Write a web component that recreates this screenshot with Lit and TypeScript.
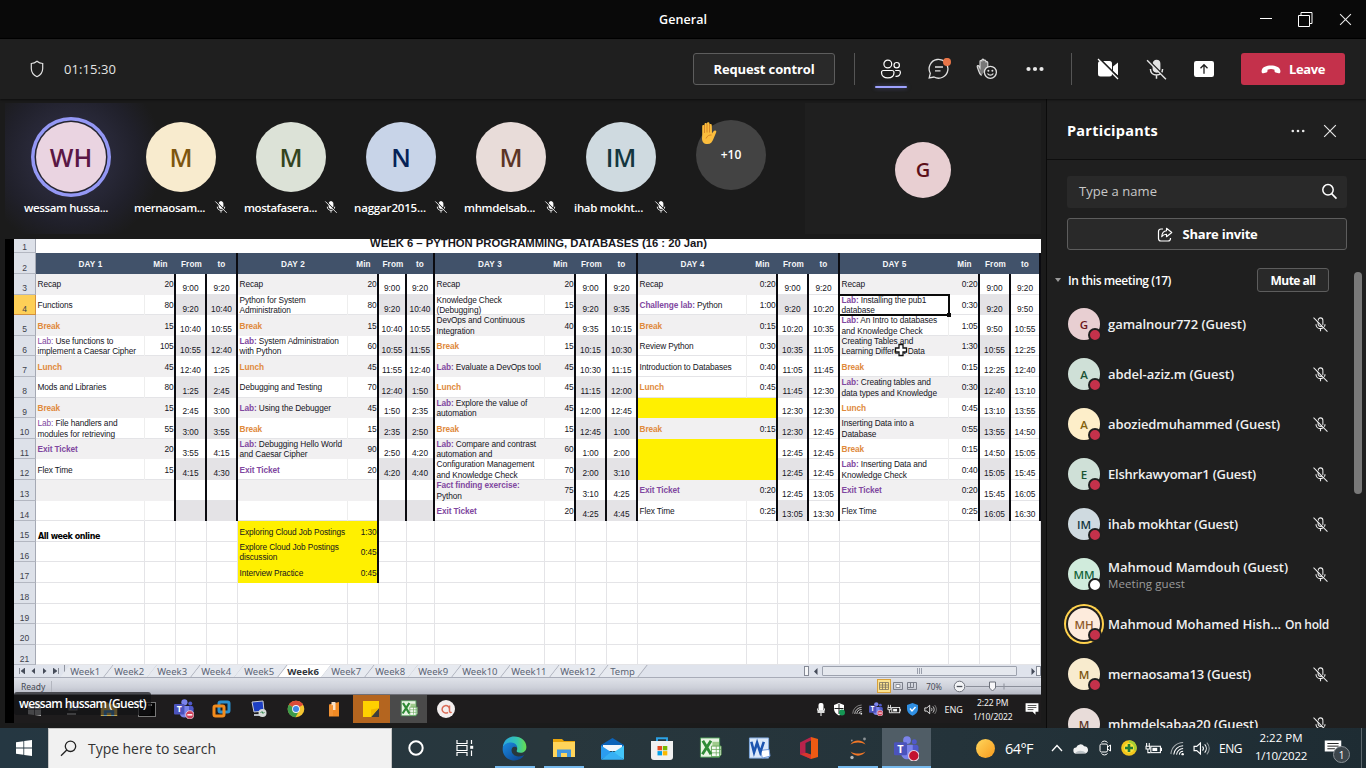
import { LitElement, html, css, svg, nothing } from "lit";
import { customElement, property } from "lit/decorators.js";
import { classMap } from "lit/directives/class-map.js";

/** Text whose tracking is adjusted so that it spans a given width. */
@customElement("fit-text")
class FitText extends LitElement {
  @property({ type: Number }) w = 0;
  @property() text = "";
  static styles = css`
    :host { display: inline-block; white-space: pre; }
    .t { display: inline-block; }
  `;
  render() {
    return html`<span class="t">${this.text}</span>`;
  }
  updated() {
    const t = this.renderRoot.querySelector(".t") as HTMLElement;
    t.style.letterSpacing = "0px";
    const now = t.getBoundingClientRect().width;
    if (this.w && now) t.style.letterSpacing = (this.w - now) / this.text.length + "px";
  }
}

const fit = (text: string, w: number) => html`<fit-text .text=${text} .w=${w}></fit-text>`;

/* ---------- icons ---------- */
const icon = (w: number, h: number, body: unknown, vb = `0 0 ${w} ${h}`) =>
  html`<svg width=${w} height=${h} viewBox=${vb} fill="none">${body}</svg>`;

const micOff = (s: number, solid = false) =>
  icon(s, s, svg`
    <rect x="7.2" y="2.2" width="5.6" height="10" rx="2.8" fill=${solid ? "currentColor" : "none"} stroke="currentColor" stroke-width="1.2"/>
    <path d="M4.7 9.6c0 3.3 2.2 5.2 5.3 5.2s5.3-1.9 5.3-5.2M10 14.8V18" stroke="currentColor" stroke-width="1.3"/>
    <path d="M2.6 1.6 18.8 17.8" stroke="#1f1f1f" stroke-width="1.6"/>
    <path d="M1.8 2 18.2 18.4" stroke="currentColor" stroke-width="1.2"/>`, "0 0 20 20");

const shield = icon(14, 18, svg`<path d="M7 1.3C5.200 2.800 3.400 3.400 1.300 3.500V8.500C1.300 12.300 3.600 15.100 7 16.700 10.400 15.100 12.700 12.300 12.700 8.500V3.500C10.600 3.400 8.800 2.800 7 1.300Z" stroke="#e0e0e0" stroke-width="1.200"/>`);

const people = icon(22, 20, svg`<g stroke="#fff" stroke-width="1.200">
  <circle cx="7.800" cy="5" r="3.900"/><circle cx="16.700" cy="6.200" r="2.700"/>
  <path d="M3.500 11.500H12c1.100 0 2 .8 2 1.900 0 3.500-2.500 5.400-6.200 5.400S1.500 16.900 1.500 13.400c0-1.100.9-1.900 2-1.900ZM15.200 11.500h3.400c1 0 1.800.8 1.800 1.800 0 2.900-1.800 4.400-4.900 4.100"/></g>`);

const chat = icon(24, 22, svg`<path d="M2.200 19.900 3.300 15.300A9.400 9.400 0 1 1 7 19l-4.800.9Z" stroke="#e0e0e0" stroke-width="1.300"/>
  <path d="M8 9h8M8 12.800h5.500" stroke="#e0e0e0" stroke-width="1.300"/><circle cx="20" cy="3.900" r="4" fill="#e97548"/>`);

const reactIcon = icon(22, 22, svg`
  <path d="M5.500 17.500C3.800 16.300 3 14.500 2.300 12L1.200 8.800c-.3-1.200 1.100-1.700 1.700-.7L4 10V3.500c0-1.400 1.900-1.400 1.900 0V2.200c0-1.500 2-1.500 2 0V3c0-1.500 2-1.400 2 .2v1.400c0-1.400 1.900-1.300 1.900.1V9" fill="#777" stroke="#ddd" stroke-width="1.100"/>
  <circle cx="14.400" cy="14.300" r="6" fill="#1f1f1f" stroke="#e0e0e0" stroke-width="1.300"/>
  <circle cx="12.400" cy="12.800" r="1" fill="#e0e0e0"/><circle cx="16.400" cy="12.800" r="1" fill="#e0e0e0"/>
  <path d="M11.500 15.500c1.300 2.200 4.500 2.200 5.800 0" stroke="#e0e0e0" stroke-width="1.200"/>`);

const dots = (r: number, g: number) => icon(20, 8, svg`<g fill="#e8e8e8"><circle cx=${10 - g} cy="4" r=${r}/><circle cx="10" cy="4" r=${r}/><circle cx=${10 + g} cy="4" r=${r}/></g>`);

const camOff = icon(22, 22, svg`<rect x="1" y="3" width="14" height="15.500" rx="2.500" fill="#fff"/><path d="m16 8.500 5-4v13l-5-4Z" fill="#fff"/>
  <path d="M2.500.5 22 20" stroke="#1f1f1f" stroke-width="1.800"/><path d="M1 1 21 21" stroke="#fff" stroke-width="1.300"/>`);

const shareUp = icon(20, 16, svg`<rect width="20" height="16" rx="2.200" fill="#fff"/><path d="M10 12.800V3.800M6.500 7.200 10 3.700l3.500 3.500" stroke="#1f1f1f" stroke-width="1.300"/>`);

const hangup = icon(20, 9, svg`<path d="M10 .6c4.700 0 8.400 1.800 9.200 4.400.3 1 .3 2-.1 2.700-.3.500-.9.600-1.500.5l-3-.7c-.7-.2-1.100-.7-1.100-1.400V4.700c-2.200-.8-4.800-.8-7 0v1.400c0 .7-.4 1.200-1.100 1.400l-3 .7c-.6.100-1.200 0-1.500-.5C.500 7 .5 6 .8 5 1.600 2.400 5.300.6 10 .6Z" fill="#fff"/>`);

const cross = (s: number) => icon(s, s, svg`<path d="M1 1 11 11M11 1 1 11" stroke="#e8e8e8" stroke-width="1"/>`, "0 0 12 12");

const lens = icon(17, 17, svg`<circle cx="7" cy="6.800" r="5.200" stroke="#fff" stroke-width="1.500"/><path d="m10.600 10.600 4.900 5" stroke="#fff" stroke-width="1.600"/>`);

const shareInvite = icon(16, 15, svg`<path d="M6 2H4a2.500 2.500 0 0 0-2.500 2.500v7A2.500 2.500 0 0 0 4 14h7a2.500 2.500 0 0 0 2.500-2.500V11" stroke="#fff" stroke-width="1.200"/>
  <path d="M9.500 1.200 14.800 5.500 9.500 9.700V7.300C7.300 7.200 6 8 4.700 9.700 5 6.300 6.500 4 9.500 3.700Z" stroke="#fff" stroke-width="1.100" stroke-linejoin="round"/>`);

const hand = icon(20, 24, svg`<path d="M4.200 13.500V5.200c0-1.700 2.300-1.700 2.300 0V3.300c0-1.800 2.500-1.800 2.500 0v-.8c0-1.800 2.500-1.700 2.500 0v1.800c0-1.700 2.300-1.600 2.300.1l.2 8.200c.8-1.500 1.800-3 3.200-3 1.300.1 1.300 1.200.8 2.100L15.400 18c-1.200 3-2.700 5-6 5-3.600 0-5.400-2-5.400-5.500Z" fill="#fbbd3d"/>
  <path d="M6.500 4.500V12M9 3v8.500M11.500 4v7.500M8 17.500c1.400-3 3.200-3.600 5.600-3.500" stroke="#cf7a22" stroke-width=".8"/>`);

const wifi = (s: number) => icon(s, s, svg`<g stroke="currentColor" stroke-width="1.100"><path d="M1 14A13 13 0 0 1 14 1.500" opacity=".6"/><path d="M4 14.500A10 10 0 0 1 14 5"/><path d="M7 14.500A7 7 0 0 1 14 8"/><path d="M10 14.500a4 4 0 0 1 4-3.500"/></g><circle cx="13.500" cy="14" r="1.300" fill="currentColor"/>`, "0 0 16 16");
const speaker = (s: number) => icon(s, s, svg`<path d="M1 6h2.500L7 2.800v10.400L3.500 10H1Z" stroke="currentColor" stroke-width="1.100"/><path d="M9 6c1 1.200 1 2.800 0 4M11 4.200c2 2.200 2 5.400 0 7.600" stroke="currentColor"/><path d="M13 2.500c3 3.200 3 7.800 0 11" stroke="currentColor" opacity=".5"/>`, "0 0 16 16");
const battery = (s: number) => icon(s, s * 0.75, svg`<rect x="5.500" y="4" width="9" height="6" stroke="currentColor"/><rect x="7" y="5.500" width="4.500" height="3" fill="currentColor"/><path d="M15.500 5.500v3M1.500 1v3M4 1v3M1 4h3.500v2.500H1ZM2.700 6.500V10H5" stroke="currentColor"/>`, "0 0 16 12");
const teams = (s: number, hold = false) => icon(s, s, svg`<circle cx="12.500" cy="4" r="3.700" fill="#7b83eb"/><circle cx="19.500" cy="5.500" r="2.400" fill="#5059c9"/>
  <rect x="16" y="8.500" width="7.500" height="10" rx="2.500" fill="#5059c9"/><path d="M7 8.500h11v8.500c0 7-11 7-11 0Z" fill="#7b83eb"/>
  <rect x="0" y="6" width="12.500" height="12.500" rx="1.200" fill="#4b53bc"/><text x="6.200" y="16" text-anchor="middle" font-family="Open Sans, sans-serif" font-size="10.500" font-weight="700" fill="#fff">T</text>
  <circle cx="19" cy="19" r="5" fill=${hold ? "#d0405a" : "#c4122f"} stroke="#e8d8df"/>${hold ? svg`<path d="M16 19h6" stroke="#fff" stroke-width="1.800"/>` : nothing}`, "0 0 24 24");
const windows = (s: number, c = "#fff") => icon(s, s, svg`<path d="M0 2.300 7.400 1.200V7.600H0ZM8.200 1.100 16 0v7.600H8.200ZM0 8.400h7.400v6.400L0 13.700ZM8.200 8.400H16V16l-7.800-1.100Z" fill=${c}/>`, "0 0 16 16");
const folder = (s: number) => icon(s, s, svg`<path d="M1 3h9l2 2h11v4H1Z" fill="#e9a50c"/><path d="M1 6h22v15H1Z" fill="#ffd45a"/><path d="M5 13.500h14V21h-4v-4H9v4H5Z" fill="#4396dd"/>`, "0 0 24 24");
const excel = (s: number) => icon(s, s, svg`<path d="M2 1h19v20H2Z" fill="#e9f4e4"/><path d="M14 5h7v15h-7Z" fill="#9fcb8b"/><path d="M13 9.500h10v9l-2 2H13Z" fill="#f7fbf4" stroke="#69a85b"/><path d="M13 13h10M13 16.500h9M18 9.500v10" stroke="#69a85b" stroke-width=".8"/><path d="m4 4 8.500 14M12.500 4 3.500 18" stroke="#2f8b36" stroke-width="3"/><path d="M1.500 1h20v20h-20Z" stroke="#4ba155" stroke-width=".9"/>`, "0 0 24 24");
const word = icon(23, 23, svg`<path d="M1.500 1h20v21h-20Z" fill="#dbe9fa" stroke="#7fa9e0"/><path d="m13 14 9-1 1 7-8 2Z" fill="#fff" stroke="#6d97d6"/><path d="m3.500 5 2.800 11L9.500 6l3.300 10L16.500 5" stroke="#1c55b0" stroke-width="2.700"/>`, "0 0 24 24");

const edge = icon(25, 25, svg`<defs>
  <linearGradient id="ea" x1="0" y1="0" x2="1" y2="0"><stop offset="0" stop-color="#2aa6e0"/><stop offset=".6" stop-color="#35c5b0"/><stop offset="1" stop-color="#68dd4c"/></linearGradient>
  <linearGradient id="eb" x1="0" y1="0" x2="1" y2="1"><stop offset="0" stop-color="#1b8be0"/><stop offset="1" stop-color="#0c3f8c"/></linearGradient></defs>
  <path d="M.8 11.500C1.300 5 6 .6 12.300.6c7 0 12 4.700 12.100 10.300 0 3.600-2.600 5.800-6 5.800-2.700 0-4.200-1-3.600-2.300 1.300-2.700-.7-6.700-5-6.700-4 0-7.500 1.500-9 3.800Z" fill="url(#ea)"/>
  <path d="M.7 12.300C1.200 8.700 5 6.300 9.500 6.500c3.200.2 5.600 2.400 5.800 5.200-1.400-1.300-4.100-1.500-5.300.6-1.600 3 1 8 6.300 8.200 2.500.1 4.400-.6 6-1.700-2 3.600-5.600 5.700-9.900 5.700C5.600 24.500.2 19.200.7 12.300Z" fill="url(#eb)"/>`);
const mail = icon(25, 23, svg`<path d="M1 8 12.500 1 24 8v5H1Z" fill="#0c63b8"/><path d="M3 8h19v6H3Z" fill="#f3f7fb"/><path d="M1 8.500 12.500 16 1 22.500Z" fill="#2b9df0"/><path d="M24 8.500 12.500 16 24 22.500Z" fill="#43c4f8"/><path d="M1 22.800 12.500 14 24 22.800Z" fill="#36b0f4"/>`);
const store = icon(24, 25, svg`<path d="M7 5V2.200h10V5" stroke="#2ca3e6" stroke-width="1.900"/><path d="M1 5h22v16a3 3 0 0 1-3 3H4a3 3 0 0 1-3-3Z" fill="#f1f1f1"/><path d="M7.500 10H12v4.300H7.500Z" fill="#e44a22"/><path d="M12.800 10h4.500v4.300h-4.500Z" fill="#79b900"/><path d="M7.500 15.100H12v4.300H7.500Z" fill="#00a1ea"/><path d="M12.800 15.100h4.500v4.300h-4.500Z" fill="#fbb900"/>`);
const office = icon(20, 24, svg`<path d="M1 6.500 12 1v3.500L6.500 7v10L12 19v4L1 18.500Z" fill="#b8234b"/><path d="M12 1l7 2v18l-7 2Z" fill="#ee5a13"/><path d="M1.500 18 7 16.800l5 1.700V23Z" fill="#d8372c"/>`);
const jupyter = icon(20, 24, svg`<path d="M2.500 8.500C5.500 3 14.500 3 17.500 8.500 13.500 5.800 6.500 5.800 2.500 8.500ZM2.500 15.500c3 5.500 12 5.500 15 0-4 2.700-11 2.700-15 0Z" fill="#f37726"/><circle cx="16.500" cy="3" r="1.400" fill="#8d9396"/><circle cx="4" cy="21.500" r="1.700" fill="#b5b9ba"/><circle cx="3.800" cy="4.500" r=".9" fill="#8d9396"/>`);
const taskview = icon(18, 16, svg`<path d="M1 0v3.500h10V0M1 16v-3.500h10V16M1 5.500h10v5H1ZM15.500 0v4M15.500 10.500V16" stroke="#fff" stroke-width="1.200"/><rect x="14.200" y="5.800" width="3" height="3" fill="#fff"/>`);
const note = (s: number) => icon(s, s, svg`<path d="M1 2h22v14.500h-5V22l-5-5.500H1Z" fill="#fff"/><path d="M4.500 6h15M4.500 9.500h15M4.500 13h10" stroke="#222" stroke-width="1.300"/>`, "0 0 24 24");

const chrome = icon(18, 18, svg`<circle cx="9" cy="9" r="8.300" fill="#f4c531"/><path d="M9 9 1.800 4.800A8.300 8.300 0 0 1 16.200 4.800Z" fill="#dd4b39"/><path d="M9 9 1.800 4.800A8.300 8.300 0 0 0 8.500 17.300L12 11Z" fill="#3d9a4b"/><circle cx="9" cy="9" r="3.900" fill="#f5f5f5"/><circle cx="9" cy="9" r="3" fill="#4386e8"/>`);

/* ---------- schedule ---------- */
type Row = { a: string; b?: string; m: string; f: string; t: string; k?: string; tag?: string; fill?: string };
const r = (a: string, m: string, f: string, t: string, fill = "", b = ""): Row => {
  if (a === "Break" || a === "Lunch") return { a: "", tag: a, k: "orange", b, m, f, t, fill };
  if (a === "Exit Ticket") return { a: "", tag: a, k: "purple", b, m, f, t, fill };
  const hit = a.match(/^(Lab:|Challenge lab:|Fact finding exercise:)(.*)$/);
  return hit ? { tag: hit[1], a: hit[2], k: "purple", b, m, f, t, fill } : { a, b, m, f, t, fill };
};
const DAYS: Row[][] = [
  [
    r("Recap", "20", "9:00", "9:20"), r("Functions", "80", "9:20", "10:40"), r("Break", "15", "10:40", "10:55"),
    { ...r("Lab: Use functions to", "105", "10:55", "12:40", "", "implement a Caesar Cipher"), k: "purple light" },
    r("Lunch", "45", "12:40", "1:25"), r("Mods and Libraries", "80", "1:25", "2:45"), r("Break", "15", "2:45", "3:00"),
    { ...r("Lab: File handlers and", "55", "3:00", "3:55", "", "modules for retrieving"), k: "purple light" },
    r("Exit Ticket", "20", "3:55", "4:15"), r("Flex Time", "15", "4:15", "4:30"), r("", "", "", ""), r("", "", "", ""),
  ],
  [
    r("Recap", "20", "9:00", "9:20"), r("Python for System", "80", "9:20", "10:40", "", "Administration"), r("Break", "15", "10:40", "10:55"),
    r("Lab: System Administration", "60", "10:55", "11:55", "", "with Python"), r("Lunch", "45", "11:55", "12:40"),
    r("Debugging and Testing", "70", "12:40", "1:50"), r("Lab: Using the Debugger", "45", "1:50", "2:35"), r("Break", "15", "2:35", "2:50"),
    r("Lab: Debugging Hello World", "90", "2:50", "4:20", "", "and Caesar Cipher"), r("Exit Ticket", "20", "4:20", "4:40"),
    r("", "", "", ""), r("", "", "", ""),
    r("Exploring Cloud Job Postings", "1:30", "", "", "yellow"), r("Explore Cloud Job Postings", "0:45", "", "", "yellow", "discussion"), r("Interview Practice", "0:45", "", "", "yellow"),
  ],
  [
    r("Recap", "20", "9:00", "9:20"), r("Knowledge Check", "15", "9:20", "9:35", "", "(Debugging)"),
    r("DevOps and Continuous", "40", "9:35", "10:15", "", "Integration"), r("Break", "15", "10:15", "10:30"),
    r("Lab: Evaluate a DevOps tool", "45", "10:30", "11:15"), r("Lunch", "45", "11:15", "12:00"),
    r("Lab: Explore the value of", "45", "12:00", "12:45", "", "automation"), r("Break", "15", "12:45", "1:00"),
    r("Lab: Compare and contrast", "60", "1:00", "2:00", "", "automation and"),
    r("Configuration Management", "70", "2:00", "3:10", "", "and Knowledge Check"),
    r("Fact finding exercise:", "75", "3:10", "4:25", "", "Python"), r("Exit Ticket", "20", "4:25", "4:45"),
  ],
  [
    r("Recap", "0:20", "9:00", "9:20"), r("Challenge lab: Python", "1:00", "9:20", "10:20"), r("Break", "0:15", "10:20", "10:35"),
    r("Review Python", "0:30", "10:35", "11:05"), r("Introduction to Databases", "0:40", "11:05", "11:45", "white"),
    r("Lunch", "0:45", "11:45", "12:30"), r("", "", "12:30", "12:30", "yellow"), r("Break", "0:15", "12:30", "12:45", "grey"),
    r("", "", "12:45", "12:45", "yellow"), r("", "", "12:45", "12:45", "yellow"), r("Exit Ticket", "0:20", "12:45", "13:05"),
    r("Flex Time", "0:25", "13:05", "13:30"),
  ],
  [
    r("Recap", "0:20", "9:00", "9:20"), r("Lab: Installing the pub1", "0:30", "9:20", "9:50", "", "database"),
    r("Lab: An Intro to databases", "1:05", "9:50", "10:55", "white", "and Knowledge Check"),
    r("Creating Tables and", "1:30", "10:55", "12:25", "grey", "Learning Different Data"), r("Break", "0:15", "12:25", "12:40", "white"),
    r("Lab: Creating tables and", "0:30", "12:40", "13:10", "grey", "data types and Knowledge"), r("Lunch", "0:45", "13:10", "13:55", "white"),
    r("Inserting Data into a", "0:55", "13:55", "14:50", "grey", "Database"), r("Break", "0:15", "14:50", "15:05", "white"),
    r("Lab: Inserting Data and", "0:40", "15:05", "15:45", "", "Knowledge Check"), r("Exit Ticket", "0:20", "15:45", "16:05"),
    r("Flex Time", "0:25", "16:05", "16:30"),
  ],
];

@customElement("week-sheet")
class WeekSheet extends LitElement {
  static styles = css`
    :host { display: block; height: 426px; overflow: hidden; background: #fff; font: 8.3px/10.6px "Liberation Sans", Arial, sans-serif; color: #15151d; position: relative; }
    .grid { display: grid; grid-template-columns: 22px 109px 31px 31px 31px 110px 31px 28px 28px 110px 31px 31px 31px 109px 31px 31px 31px 109px 31px 31px 30px; grid-template-rows: 14px 21px repeat(19, 20.6px); }
    .num { background: #dde1e9; border-right: 1px solid #a5a9b4; border-bottom: 1px solid #b3b7c1; box-sizing: border-box; display: flex; align-items: flex-end; justify-content: center; font-size: 8.5px; line-height: 9.500px; color: #3d424c; }
    .num.on { background: #fdcf57; border-color: #d3903d; }
    .title { grid-column: span 20; overflow: hidden; text-align: center; font-weight: 700; font-size: 11.3px; line-height: 9px; color: #17171c; }
    .head { background: #41526a; color: #f4f6f9; font-weight: 700; font-size: 8.2px; display: flex; align-items: center; justify-content: center; letter-spacing: .15px; box-sizing: border-box; padding-top: 3px; }
    .head.end { border-right: 2px solid #0b0b10; }
    .cell { box-sizing: border-box; min-width: 0; overflow: hidden; display: flex; white-space: pre; box-shadow: inset 0 -1px #e4e4e7; border-right: 1px solid #e4e4e7; }
    .name { align-items: center; padding: .8px 0 0 1.500px; letter-spacing: -.1px; border-right-color: #eee; }
    .min { align-items: center; justify-content: flex-end; letter-spacing: -.1px; padding: .8px .5px 0 0; }
    .min.edge { border-right: 2px solid #0b0b10; }
    .time { align-items: flex-end; justify-content: center; line-height: 10px; padding-bottom: 1.700px; border-right: 2px solid #0b0b10; }
    .grey { background: #f1f0f1; box-shadow: none; }
    .name.grey { border-right-color: #f1f0f1; }
    .time.grey { background: #e4e3e6; }
    .yellow { background: #fff000; box-shadow: none; }
    .name.yellow { border-right-color: #fff000; }
    .orange { color: #e08a3c; font-weight: 700; }
    .purple { color: #8148a0; font-weight: 700; }
    .light { font-weight: 400; }
    .note { align-items: flex-end; padding-left: 2px; font-weight: 700; font-size: 8px; line-height: 8.500px; font-family: "DejaVu Sans", sans-serif; letter-spacing: -.45px; color: #000; }
    .sel { position: absolute; left: 824px; top: 55px; width: 108px; height: 18px; border: 2px solid #0a0a0a; }
    .knob { position: absolute; left: 933px; top: 74px; width: 4px; height: 4px; background: #0a0a0a; }
    .cursor { position: absolute; left: 880px; top: 104px; }
  `;
  private day(d: number, i: number) {
    const row = DAYS[d][i];
    if (!row) {
      return [0, 1, 2, 3].map((c) => d === 0 && i === 12 && c === 0
        ? html`<div class="cell note">All week online</div>` : html`<div class="cell"></div>`);
    }
    const tone = row.fill || (i % 2 === 0 ? "grey" : "");
    const extra = i > 11;
    const bg = { yellow: tone === "yellow", grey: tone === "grey" };
    const tGrey = !extra && i % 2 === 1;
    return html`
      <div class=${classMap({ cell: true, name: true, ...bg })}><div>${row.tag ? html`<span class=${row.k ?? ""}>${row.tag}</span>` : nothing}${row.a}${row.b ? html`<br />${row.b}` : nothing}</div></div>
      <div class=${classMap({ cell: true, min: true, edge: true, ...bg })}>${row.m}</div>
      ${extra ? html`<div class="cell"></div><div class="cell"></div>` : html`
      <div class=${classMap({ cell: true, time: true, grey: tGrey })}>${row.f}</div>
      <div class=${classMap({ cell: true, time: true, grey: tGrey && d < 3 })}>${row.t}</div>`}`;
  }
  render() {
    return html`<div class="grid">
        <div class="num">1</div><div class="title">${fit("WEEK 6 – PYTHON PROGRAMMING, DATABASES (16 : 20 Jan)", 337)}</div>
        <div class="num">2</div>
        ${DAYS.map((_, d) => html`<div class="head">DAY ${d + 1}</div><div class="head">Min</div><div class="head">From</div><div class="head end">to</div>`)}
        ${Array.from({ length: 19 }, (_, i) => html`<div class=${classMap({ num: true, on: i === 1 })}>${i + 3}</div>${DAYS.map((_, d) => this.day(d, i))}`)}
      </div>
      <div class="sel"></div><div class="knob"></div>
      <svg class="cursor" width="14" height="14" viewBox="0 0 14 14"><path d="M5 1.500h4V5h3.500v4H9v3.500H5V9H1.500V5H5Z" fill="#fff" stroke="#111" stroke-width="1.300"/></svg>`;
  }
}

@customElement("shared-screen")
class SharedScreen extends LitElement {
  static styles = css`
    :host { display: flex; flex-direction: column; width: 1027px; height: 484px; padding-left: 9px; background: #000; position: relative; font-family: "Noto Sans", "Open Sans", sans-serif; }
    svg { display: block; flex: none; }
    .tabs { height: 13px; background: #dfe3ec; display: flex; align-items: stretch; border-bottom: 1px solid #a8acb8; box-sizing: border-box; }
    .nav { width: 51px; box-sizing: border-box; border-right: 1px solid #8f939e; display: flex; align-items: center; justify-content: space-around; color: #444a58; padding: 0 2px; }
    .tab { display: flex; align-items: center; justify-content: center; font-size: 9.5px; line-height: 12px; color: #5b6474; width: 43.5px; border-right: 1px solid #a7abb7; transform: skewX(-38deg); box-sizing: border-box; background: #e7eaf0; padding-top: 2px; }
    .tab span { transform: skewX(38deg); }
    .tab.on { background: #fff; color: #31353c; font-weight: 700; }
    .tab.wide { width: 49.300px; }
    .tab.temp { width: 39px; }
    .gap { flex: 1; }
    .handle { width: 3px; border: 1px solid #858a96; background: #f6f7f9; margin: 1px 4px 1px 0; }
    .handle.last { margin-right: 0; }
    .arrow { align-self: center; }
    .bar { width: 195px; border: 1px solid #9da2ae; background: #e5e8ee; margin: 1px 14px 1px 4px; box-sizing: border-box; display: flex; justify-content: center; align-items: center; border-radius: 1px; }
    .status { height: 17px; background: linear-gradient(#dfe2e9, #cdd0d9 60%, #b7bac5); border-bottom: 1px solid #6f7078; box-sizing: border-box; display: flex; align-items: center; color: #454954; font-size: 8.5px; }
    .ready { width: 30px; padding-left: 7px; border-right: 1px solid #b3b6bf; }
    .view { width: 12px; height: 12px; display: grid; place-items: center; margin-right: 2px; }
    .view.on { background: #fbe28e; box-shadow: 0 0 0 1px #d8a03a; }
    .pct { margin: 0 10px 0 6px; font-size: 8px; }
    .inner { height: 28px; background: #1e1c1d; display: flex; align-items: center; color: #f2f2f2; overflow: hidden; padding-left: 2px; }
    .app { width: 37.400px; height: 28px; display: grid; place-items: center; flex: none; }
    .app.sticky { background: #b4651f; }
    .app.xl { background: #4a4a4a; }
    .tray { display: flex; align-items: center; }
    .ti { width: 18.300px; display: grid; place-items: center; flex: none; }
    .lang { width: 28px; text-align: center; font-size: 9px; }
    .clock { width: 50px; text-align: center; font-size: 8.500px; line-height: 14px; letter-spacing: -.1px; white-space: nowrap; margin-right: 5px; padding-top: 1px; }
    .who { position: absolute; left: 9px; top: 453px; height: 23px; width: 137px; box-sizing: border-box; padding-left: 5px; border-radius: 3px; background: rgba(18, 18, 20, .68); color: #fff; font: 600 12px/24px "Open Sans", sans-serif; }
  `;
  render() {
    const tabs = [...Array.from({ length: 12 }, (_, i) => `Week${i + 1}`), "Temp"];
    return html`<week-sheet></week-sheet>
      <div class="tabs">
        <div class="nav">
          ${icon(6, 6, svg`<path d="M.5 0v6M6 0v6L2 3Z" fill="currentColor" stroke="currentColor" stroke-width=".6"/>`)}
          ${icon(5, 6, svg`<path d="M4 0v6L.5 3Z" fill="currentColor"/>`)}
          ${icon(5, 6, svg`<path d="M1 0v6l3.500-3Z" fill="currentColor"/>`)}
          ${icon(6, 6, svg`<path d="M5.500 0v6M0 0v6l4-3Z" fill="currentColor" stroke="currentColor" stroke-width=".6"/>`)}
        </div>
        ${tabs.map((t, i) => html`<div class=${classMap({ tab: true, on: t === "Week6", wide: i > 8 && i < 12, temp: i === 12 })}><span>${t}</span></div>`)}
        <div class="gap"></div>
        <div class="handle"></div>
        <div class="arrow">${icon(5, 7, svg`<path d="M4.500 0v7L1 3.500Z" fill="#444a58"/>`)}</div>
        <div class="bar">${icon(6, 6, svg`<path d="M.5 0v6M2.500 0v6M4.500 0v6" stroke="#9a9fac"/>`)}</div>
        <div class="arrow">${icon(5, 7, svg`<path d="M.5 0v7L4 3.500Z" fill="#444a58"/>`)}</div>
        <div class="handle last"></div>
      </div>
      <div class="status">
        <div class="ready">Ready</div><div class="gap"></div>
        <div class="view on">${icon(10, 8, svg`<path d="M.5.500h9v7h-9ZM.5 3h9M.5 5.200h9M3.500.5v7M6.500.5v7" stroke="#7b7260" stroke-width=".8"/>`)}</div>
        <div class="view">${icon(10, 8, svg`<path d="M.5.500h9v7h-9Z" stroke="#7b7f8a"/><path d="M3 2.500h4v3H3Z" fill="#fff" stroke="#7b7f8a" stroke-width=".8"/>`)}</div>
        <div class="view">${icon(10, 8, svg`<path d="M.5.500h9v7h-9ZM3.500.5v5M6.500.5v5h-6" stroke="#7b7f8a"/>`)}</div>
        <div class="pct">70%</div>
        ${icon(89, 13, svg`<circle cx="7.500" cy="6.500" r="5.300" fill="#f3f4f6" stroke="#6d717b"/><path d="M4.700 6.500h5.600" stroke="#4b4f59" stroke-width="1.300"/><path d="M14 6.500h75" stroke="#8b8f9a"/><path d="M52 3.500v6" stroke="#8b8f9a"/><path d="M37.500 2h6v6l-3 3-3-3Z" fill="#f7f7f9" stroke="#6d717b"/>`)}
      </div>
      <div class="inner">
        <div class="app">${windows(13, "#b5b5b5")}</div>
        <div class="app">${icon(16, 18, svg`<rect x="5" y="3" width="8" height="7" fill="#2838a8" stroke="#888"/><path d="M3 14h9" stroke="#999" stroke-width="2"/><path d="m6 9 4-4" stroke="#e8d31e" stroke-width="1.500"/>`)}</div>
        <div class="app">${folder(18)}</div>
        <div class="app">${icon(18, 15, svg`<rect x=".5" y=".5" width="17" height="14" fill="#050505" stroke="#777"/><path d="M10 3h4" stroke="#ccc"/>`)}</div>
        <div class="app">${teams(20, true)}</div>
        <div class="app">${icon(19, 18, svg`<rect x="7" y="2" width="10" height="10" rx="1.500" stroke="#2b8fce" stroke-width="3"/><rect x="2" y="6" width="10" height="10" rx="1.500" stroke="#f18b1d" stroke-width="3"/>`)}</div>
        <div class="app">${icon(18, 18, svg`<path d="M2 2 13 1l1 10-10 1Z" fill="#1d3fc4" stroke="#c7ccd8"/><path d="M4 14h7v2H4Z" fill="#b7bcc4"/><circle cx="12.500" cy="13" r="4" fill="#d6dcd9"/><path d="m10.500 13 1.500-1.500 1 2 1.500-1.500" stroke="#3c8b55"/>`)}</div>
        <div class="app">${chrome}</div>
        <div class="app">${icon(12, 18, svg`<path d="M1 4.500 11 2v14.500H1Z" fill="#f08a24"/><path d="M3.500 2h4v8h-4Z" fill="#f8e1c8"/><path d="M1 6l4-1v11H1Z" fill="#f29335"/>`)}</div>
        <div class="app sticky">${icon(18, 18, svg`<path d="M1 1h16v16H1Z" fill="#ffd000"/><path d="M9 17 17 8v9Z" fill="#3d3d3d"/><path d="M9 17V9.500L17 8Z" fill="#f0b800"/>`)}</div>
        <div class="app xl">${excel(18)}</div>
        <div class="app">${icon(18, 18, svg`<circle cx="9" cy="9" r="9" fill="#f3eeee"/><path d="M12.500 9.500a3.700 3.700 0 1 0-1.500 2.800M12.500 5.500v5.500c0 1.500 1.200 2 2 .8" stroke="#d96a55" stroke-width="1.500"/>`)}</div>
        <div class="gap"></div>
        <div class="tray">
          <div class="ti">${icon(10, 13, svg`<rect x="2.500" y="0" width="5" height="8" rx="2" fill="#fff"/><path d="M1.500 5.500c0 5 7 5 7 0M5 9v4" stroke="#fff"/><path d="M1.500 7h7v3h-7Z" fill="#ddd"/>`)}</div>
          <div class="ti">${icon(12, 13, svg`<path d="M6 0 11 2v4c0 3-2 5-5 6.500C3 11 1 9 1 6V2Z" fill="#fff"/><path d="M6 1v10M1.500 5.500h9" stroke="#222"/><circle cx="9" cy="9.500" r="3" fill="#169654"/>`)}</div>
          <div class="ti">${wifi(11)}</div>
          <div class="ti">${teams(14, true)}</div>
          <div class="ti">${battery(14)}</div>
          <div class="ti">${icon(11, 13, svg`<path d="M5.500 0 11 2v4c0 3-2.200 5.200-5.500 6.800C2.200 11.200 0 9 0 6V2Z" fill="#2f8fe3"/><path d="m3 5.500 2 2.500 3.500-4" stroke="#fff" stroke-width="1.400"/>`)}</div>
          <div class="ti">${speaker(13)}</div>
          <div class="lang">ENG</div>
          <div class="clock">2:22 PM<br />1/10/2022</div>
          <div class="ti">${note(14)}</div>
        </div>
      </div>
      <div class="who">${fit("wessam hussam (Guest)", 127)}</div>`;
  }
}

const TILES = [
  { n: "wessam hussa...", i: "WH", bg: "#ead4e1", fg: "#5a1745", w: 84, on: true },
  { n: "mernaosam...", i: "M", bg: "#f8ebce", fg: "#7d560f", w: 71 },
  { n: "mostafasera...", i: "M", bg: "#dce2d7", fg: "#33441e", w: 73 },
  { n: "naggar2015...", i: "N", bg: "#c8d4e8", fg: "#052257", w: 72 },
  { n: "mhmdelsab...", i: "M", bg: "#e8dcd9", fg: "#5b3526", w: 71 },
  { n: "ihab mokht...", i: "IM", bg: "#cfdae0", fg: "#14363f", w: 69 },
];
const PEOPLE = [
  { n: "gamalnour772 (Guest)", i: "G", bg: "#e8cfd2", fg: "#6a1620", w: 138, s: "busy" },
  { n: "abdel-aziz.m (Guest)", i: "A", bg: "#cfe0d7", fg: "#1a5334", w: 126, s: "busy" },
  { n: "aboziedmuhammed (Guest)", i: "A", bg: "#fdeec9", fg: "#83610b", w: 172, s: "busy" },
  { n: "Elshrkawyomar1 (Guest)", i: "E", bg: "#cfe0d7", fg: "#1a5334", w: 148, s: "busy" },
  { n: "ihab mokhtar (Guest)", i: "IM", bg: "#cfdae0", fg: "#14363f", w: 130, s: "busy" },
  { n: "Mahmoud Mamdouh (Guest)", i: "MM", bg: "#d0ebdc", fg: "#17663c", w: 180, s: "away", sub: "Meeting guest" },
  { n: "Mahmoud Mohamed Hish...", i: "MH", bg: "#fdebdc", fg: "#8f5a2c", w: 173, s: "busy", hold: true },
  { n: "mernaosama13 (Guest)", i: "M", bg: "#f8ebce", fg: "#7d560f", w: 143, s: "busy" },
  { n: "mhmdelsabaa20 (Guest)", i: "M", bg: "#e8dcd9", fg: "#5b3526", w: 150, s: "" },
];

@customElement("app-root")
class AppRoot extends LitElement {
  static styles = css`
    :host { display: flex; flex-direction: column; width: 1366px; height: 768px; overflow: hidden; background: #1a1a1a; color: #fff; font-family: "Open Sans", "Noto Sans", sans-serif; font-size: 13px; }
    svg { display: block; flex: none; }
    .title { height: 38px; border-bottom: 1px solid #000; background: #090909; display: grid; grid-template-columns: 1fr auto 1fr; align-items: center; font-size: 12.500px; font-weight: 600; }
    .win { display: flex; justify-content: flex-end; align-items: center; gap: 26px; padding-right: 14px; }
    .tools { height: 60px; background: #1f1f1f; display: flex; align-items: center; box-shadow: 0 1px 2px #0008; z-index: 1; box-sizing: border-box; padding-left: 30px; color: #e4e4e4; }
    .time { margin-left: 20px; }
    .grow { flex: 1; }
    .btn { box-sizing: border-box; border: 1px solid #5d5d5d; border-radius: 3px; background: #292929; display: flex; align-items: center; justify-content: center; font-weight: 700; color: #fff; }
    .req { width: 142px; height: 32px; margin-right: 19px; }
    .rule { width: 1px; height: 32px; background: #555; margin-right: 12px; }
    .rule.second { margin-left: 12px; }
    .slot { width: 48px; height: 60px; display: grid; place-items: center; position: relative; }
    .slot.on::after { content: ""; position: absolute; left: 8px; right: 8px; top: 47px; height: 2px; background: #9ea2ff; box-shadow: 0 0 4px #7b7fe080; border-radius: 1px; }
    .leave { width: 104px; height: 32px; margin: 0 21px 0 13px; border-radius: 3px; background: #c4314b; display: flex; align-items: center; justify-content: center; gap: 8px; font-weight: 700; color: #fff; }
    .main { flex: 1; min-height: 0; display: flex; }
    .stage { width: 1046px; flex: none; display: flex; flex-direction: column; padding-left: 5px; box-sizing: border-box; background: #1b1b1b; }
    .strip { height: 131px; margin: 4px 0 5px; display: flex; }
    .tiles { flex: 1; display: flex; padding-left: 11px; box-sizing: border-box; background: radial-gradient(circle at 66px 54px, #30304a 0, #272736 45px, #20202a 68px, #1b1b1b 92px); }
    .tile { width: 110px; padding-top: 19px; box-sizing: border-box; position: relative; display: flex; flex-direction: column; align-items: center; }
    .av { width: 70px; height: 70px; box-sizing: border-box; padding-bottom: 1px; border-radius: 50%; display: grid; place-items: center; font-size: 25px; font-weight: 600; }
    .tile.on .av { box-shadow: 0 0 0 1.500px #24242f, 0 0 0 5px #9498f5; }
    .lab { width: 94px; display: flex; align-items: center; justify-content: space-between; height: 20px; margin-top: 5px; font-size: 11.500px; font-weight: 600; }
    .more .av { background: #434343; font-size: 12px; margin-top: -2px; font-weight: 600; }
    .hand { position: absolute; left: 22px; top: 18px; }
    .self { width: 236px; margin-right: 5px; background: #1f1f1f; display: grid; place-items: center; padding-top: 2px; box-sizing: border-box; }
    .self .av { width: 56px; height: 56px; font-size: 20px; background: #e8cfd2; color: #5c0f19; }
    .panel { flex: 1; background: #1f1f1f; border-left: 1px solid #0b0b0b; display: flex; flex-direction: column; min-height: 0; }
    .ph { border-bottom: 1px solid #0e0e0e; display: flex; align-items: center; padding: 3px 29px 0 20px; font-size: 14.500px; font-weight: 700; gap: 15px; height: 57px; }
    .search { margin: 16px 19px 0 20px; height: 32px; box-sizing: border-box; background: #292929; border-radius: 3px; display: flex; align-items: center; justify-content: space-between; padding: 0 9px 2px 12px; color: #c8c8c8; }
    .share { margin: 10px 19px 0 20px; height: 32px; gap: 10px; flex: none; }
    .body { flex: 1; min-height: 0; display: flex; justify-content: space-between; }
    .list { width: 282px; overflow: hidden; margin-top: 18px; }
    .sec { display: flex; align-items: center; height: 24px; padding-left: 8px; gap: 7px; font-size: 12px; font-weight: 600; margin-bottom: 7px; }
    .mute { width: 72px; height: 24px; font-size: 12px; margin-left: auto; }
    .p { height: 50px; display: flex; align-items: center; padding: 0 0 0 21px; font-size: 13px; font-weight: 600; color: #f0f0f0; }
    .pa { width: 32px; height: 32px; border-radius: 50%; display: grid; place-items: center; font-size: 11.500px; position: relative; margin-right: 8px; }
    .pa.ring { box-shadow: 0 0 0 2px #1f1f1f, 0 0 0 4px #ffd24d; }
    .dot { position: absolute; left: 20px; top: 20px; width: 10px; height: 10px; border-radius: 50%; border: 2px solid #1f1f1f; background: #c4314b; }
    .dot.away { background: #fff; }
    .nm { flex: 1; min-width: 0; line-height: 17px; }
    .sub { font-size: 11.500px; font-weight: 400; color: #9c9c9c; margin-top: -1px; }
    .nm.two { padding-top: 2px; }
    .hold { font-size: 12px; }
    .ic { width: 17px; display: grid; place-items: center; }
    .scroll { width: 8px; height: 222px; margin: 22px 4px 0 0; background: #797979; border-radius: 4px; }
    .task { height: 40px; background: linear-gradient(90deg, #253742, #28373d 40%, #24333a 70%, #1e2c33); display: flex; align-items: stretch; }
    .start { width: 48px; display: grid; place-items: center; }
    .find { width: 344px; box-sizing: border-box; border: 1px solid #c5c5c5; border-bottom: 0; background: #f1f1f1; color: #333; display: flex; align-items: center; padding-left: 11px; gap: 11px; font-size: 14px; }
    .tb { width: 49px; display: grid; place-items: center; position: relative; }
    .tb.lead { padding-right: 2px; box-sizing: border-box; }
    .tb.run::after { content: ""; position: absolute; left: 5px; width: 40px; bottom: 0; height: 2px; background: #76b9ed; }
    .tb.act { background: #505d66; }
    .tb.act::after { left: 0; width: 49px; }
    .wx { margin-left: 45px; display: flex; align-items: center; gap: 10px; font-size: 14.500px; width: 69px; }
    .sun { width: 19px; height: 19px; border-radius: 50%; background: linear-gradient(135deg, #ffd75e, #f79a1c); }
    .tr { width: 24px; display: grid; place-items: center; }
    .eng { width: 35px; display: grid; place-items: center; font-size: 12px; }
    .clk { width: 66px; text-align: center; font-size: 11.500px; line-height: 18px; padding-top: 1px; white-space: nowrap; }
    .nt { width: 46px; box-sizing: border-box; padding-right: 10px; display: grid; place-items: center; position: relative; }
    .badge { position: absolute; left: 18px; top: 18px; width: 15px; height: 15px; border-radius: 50%; background: #3d464c; border: 1px solid #8b9297; display: grid; place-items: center; font-size: 10px; }
    .peek { border-left: 1px solid #5d686e; width: 4px; }
  `;
  render() {
    return html`
      <div class="title"><span></span><span>${fit("General", 48)}</span>
        <div class="win">
          ${icon(12, 12, svg`<path d="M0 5.500h12" stroke="#fff"/>`)}
          ${icon(15, 15, svg`<path d="M.500 3.500h11v11H.5ZM3 3.500V.500h11v11h-2.500" stroke="#fff"/>`)}
          ${cross(13)}
        </div>
      </div>
      <div class="tools">
        ${shield}<span class="time">${fit("01:15:30", 52)}</span><span class="grow"></span>
        <div class="btn req">${fit("Request control", 101)}</div>
        <div class="rule"></div>
        <div class="slot on">${people}</div><div class="slot">${chat}</div><div class="slot">${reactIcon}</div><div class="slot">${dots(2.1, 6.5)}</div>
        <div class="rule second"></div>
        <div class="slot">${camOff}</div><div class="slot">${micOff(23, true)}</div><div class="slot">${shareUp}</div>
        <div class="leave">${hangup}${fit("Leave", 36)}</div>
      </div>
      <div class="main">
        <div class="stage">
          <div class="strip">
            <div class="tiles">
              ${TILES.map((t) => html`<div class=${classMap({ tile: true, on: !!t.on })}>
                <div class="av" style="background:${t.bg};color:${t.fg}">${t.i}</div>
                <div class="lab">${fit(t.n, t.w)}${t.on ? nothing : micOff(14, true)}</div>
              </div>`)}
              <div class="tile more"><div class="av">+10</div><div class="hand">${hand}</div></div>
            </div>
            <div class="self"><div class="av">G</div></div>
          </div>
          <shared-screen></shared-screen>
        </div>
        <div class="panel">
          <div class="ph">${fit("Participants", 91)}<span class="grow"></span>${dots(1.3, 5.2)}${cross(14)}</div>
          <div class="search">${fit("Type a name", 78)}${lens}</div>
          <div class="btn share">${shareInvite}${fit("Share invite", 75)}</div>
          <div class="body">
            <div class="list">
              <div class="sec">${icon(6, 4, svg`<path d="M0 0h6L3 4Z" fill="#9a9a9a"/>`)}${fit("In this meeting (17)", 103)}<div class="btn mute">${fit("Mute all", 45)}</div></div>
              ${PEOPLE.map((p) => html`<div class="p">
                <div class=${classMap({ pa: true, ring: !!p.hold })} style="background:${p.bg};color:${p.fg}">${p.i}${p.s ? html`<div class="dot ${p.s}"></div>` : nothing}</div>
                <div class=${classMap({ nm: true, two: !!p.sub })}>${fit(p.n, p.w)}${p.sub ? html`<div class="sub">${fit(p.sub, 77)}</div>` : nothing}</div>
                ${p.hold ? html`<div class="hold">${fit("On hold", 44)}</div>` : html`<div class="ic">${micOff(17)}</div>`}
              </div>`)}
            </div>
            <div class="scroll"></div>
          </div>
        </div>
      </div>
      <div class="task">
        <div class="start">${windows(16)}</div>
        <div class="find">${icon(17, 17, svg`<circle cx="10.500" cy="6.300" r="5.200" stroke="#222" stroke-width="1.300"/><path d="M6.800 10 1 15.800" stroke="#222" stroke-width="1.300"/>`)}${fit("Type here to search", 128)}</div>
        <div class="tb lead">${icon(16, 16, svg`<circle cx="8" cy="8" r="6.700" stroke="#fff" stroke-width="2"/>`)}</div>
        <div class="tb lead">${taskview}</div>
        <div class="tb run">${edge}</div>
        <div class="tb run">${folder(24)}</div>
        <div class="tb">${mail}</div>
        <div class="tb">${store}</div>
        <div class="tb">${excel(23)}</div>
        <div class="tb">${word}</div>
        <div class="tb">${office}</div>
        <div class="tb run">${jupyter}</div>
        <div class="tb run act">${teams(25)}</div>
        <div class="wx"><div class="sun"></div>${fit("64°F", 28)}</div>
        <div class="tr">${icon(12, 8, svg`<path d="m1 7 5-5.500L11 7" stroke="#fff" stroke-width="1.300"/>`)}</div>
        <div class="tr">${icon(16, 11, svg`<path d="M3.500 10.500a3 3 0 0 1-.3-6 4.500 4.500 0 0 1 8-1.200 3.700 3.700 0 0 1 1.300 7.200Z" fill="#f1f1f1"/><path d="M2 10.500c2-3 7-4 11-.5Z" fill="#bcc3c7"/>`)}</div>
        <div class="tr">${icon(13, 16, svg`<rect x="1" y="4" width="7.500" height="8" rx="1.500" stroke="#fff"/><path d="m8.500 7 3-2v6l-3-2M2.500 2.500C4 .6 7 .6 8.500 2.500M2.500 13.500C4 15.400 7 15.400 8.500 13.500" stroke="#fff"/>`)}</div>
        <div class="tr">${icon(16, 16, svg`<circle cx="8" cy="8" r="7.800" fill="#f2c51c"/><path d="M8 .2A7.800 7.800 0 0 1 15 11L8 8Z" fill="#a5cf34"/><circle cx="8" cy="8" r="5" fill="#f9e23a"/><path d="M8 4v8M4 8h8" stroke="#217a35" stroke-width="2.600"/>`)}</div>
        <div class="tr">${battery(17)}</div>
        <div class="tr">${wifi(15)}</div>
        <div class="tr">${speaker(17)}</div>
        <div class="eng">${fit("ENG", 23)}</div>
        <div class="clk">${fit("2:22 PM", 43)}<br />${fit("1/10/2022", 52)}</div>
        <div class="grow"></div>
        <div class="nt">${note(18)}<div class="badge">1</div></div>
        <div class="peek"></div>
      </div>`;
  }
}
